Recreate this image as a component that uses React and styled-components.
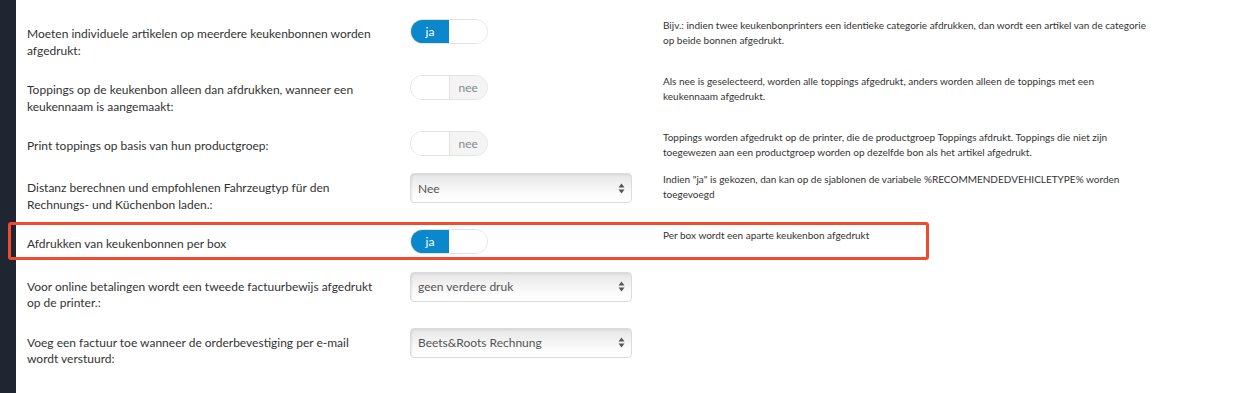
import React from 'react';
import styled, { createGlobalStyle } from 'styled-components';

const GlobalStyle = createGlobalStyle`
  html, body {
    margin: 0;
    padding: 0;
    background: #ffffff;
    font-family: Lato, 'Liberation Sans', sans-serif;
    color: #333333;
  }
`;

const settings = [
  {
    label: 'Moeten individuele artikelen op meerdere keukenbonnen worden afgedrukt:',
    type: 'toggle',
    value: true,
    help: 'Bijv.: indien twee keukenbonprinters een identieke categorie afdrukken, dan wordt een artikel van de categorie op beide bonnen afgedrukt.',
  },
  {
    label: 'Toppings op de keukenbon alleen dan afdrukken, wanneer een keukennaam is aangemaakt:',
    type: 'toggle',
    value: false,
    help: 'Als nee is geselecteerd, worden alle toppings afgedrukt, anders worden alleen de toppings met een keukennaam afgedrukt.',
  },
  {
    label: 'Print toppings op basis van hun productgroep:',
    type: 'toggle',
    value: false,
    help: 'Toppings worden afgedrukt op de printer, die de productgroep Toppings afdrukt. Toppings die niet zijn toegewezen aan een productgroep worden op dezelfde bon als het artikel afgedrukt.',
  },
  {
    label: 'Distanz berechnen und empfohlenen Fahrzeugtyp für den Rechnungs- und Küchenbon laden.:',
    type: 'select',
    value: 'Nee',
    help: 'Indien "ja" is gekozen, dan kan op de sjablonen de variabele %RECOMMENDEDVEHICLETYPE% worden toegevoegd',
  },
  {
    label: 'Afdrukken van keukenbonnen per box',
    type: 'toggle',
    value: true,
    help: 'Per box wordt een aparte keukenbon afgedrukt',
    highlight: true,
  },
  {
    label: 'Voor online betalingen wordt een tweede factuurbewijs afgedrukt op de printer.:',
    type: 'select',
    value: 'geen verdere druk',
  },
  {
    label: 'Voeg een factuur toe wanneer de orderbevestiging per e-mail wordt verstuurd:',
    type: 'select',
    value: 'Beets&Roots Rechnung',
  },
];

const Toggle = ({ on }) => (
  <ToggleWrap>
    <ToggleHalf active={on}>{on ? 'ja' : ''}</ToggleHalf>
    <ToggleHalf off={!on}>{on ? '' : 'nee'}</ToggleHalf>
  </ToggleWrap>
);

const Select = ({ value }) => (
  <SelectBox>
    <span>{value}</span>
    <svg width="7" height="11" viewBox="0 0 7 11">
      <path d="M3.5 0.5 L6.5 4.5 H0.5 Z" fill="#555" />
      <path d="M3.5 10.5 L6.5 6.5 H0.5 Z" fill="#555" />
    </svg>
  </SelectBox>
);

const App = () => {
  return (
    <Page>
      <GlobalStyle />
      <Sidebar />
      <Content>
        {settings.map((s, i) => (
          <Row key={i} highlight={s.highlight}>
            <Label>{s.label}</Label>
            <Control>
              {s.type === 'toggle' ? <Toggle on={s.value} /> : <Select value={s.value} />}
            </Control>
            <Help>{s.help}</Help>
          </Row>
        ))}
      </Content>
    </Page>
  );
};

const Page = styled.div`
  display: flex;
  width: 1235px;
  height: 393px;
  overflow: hidden;
  background: #fff;
`;

const Sidebar = styled.div`
  width: 16px;
  flex-shrink: 0;
  background: #1f2631;
`;

const Content = styled.div`
  flex: 1;
  padding: 19px 0 0 11px;
`;

const Row = styled.div`
  position: relative;
  display: grid;
  grid-template-columns: 350px 286px 486px;
  align-items: start;
  margin-bottom: ${props => (props.highlight ? '13px' : '10px')};

  &::after {
    content: '';
    display: ${props => (props.highlight ? 'block' : 'none')};
    position: absolute;
    left: -19px;
    top: -7px;
    width: 915px;
    height: 32px;
    border: 3px solid #ef4b2f;
    border-radius: 3px;
    pointer-events: none;
  }
`;

const Label = styled.div`
  padding: 7px 0 6px 0;
  font-size: 12px;
  line-height: 16.5px;
  color: #333;
`;

const Control = styled.div`
  padding-left: 33px;
`;

const Help = styled.div`
  margin-top: -1px;
  padding-bottom: 3px;
  font-size: 10px;
  line-height: 15px;
  color: #333;
`;

const ToggleWrap = styled.div`
  display: flex;
  width: 78px;
  height: 25px;
  border: 1px solid #e2e2e2;
  border-radius: 13px;
  overflow: hidden;
  box-sizing: border-box;
`;

const ToggleHalf = styled.div`
  flex: 1;
  display: flex;
  align-items: center;
  justify-content: center;
  font-size: 12px;
  background: ${props => (props.active ? '#0a88cb' : props.off ? '#f4f4f4' : '#fff')};
  color: ${props => (props.active ? '#fff' : '#888')};
  border-left: ${props => (props.off ? '1px solid #e2e2e2' : 'none')};
`;

const SelectBox = styled.div`
  display: flex;
  align-items: center;
  justify-content: space-between;
  width: 222px;
  height: 30px;
  padding: 0 6px 0 7px;
  box-sizing: border-box;
  border: 1px solid #dcdcdc;
  border-radius: 4px;
  background: linear-gradient(#e6e6e6, #fbfbfb 70%, #ffffff);
  box-shadow: inset 1px 1px 2px rgba(0, 0, 0, 0.08);
  font-size: 12px;
  color: #555;
`;

export default App;
